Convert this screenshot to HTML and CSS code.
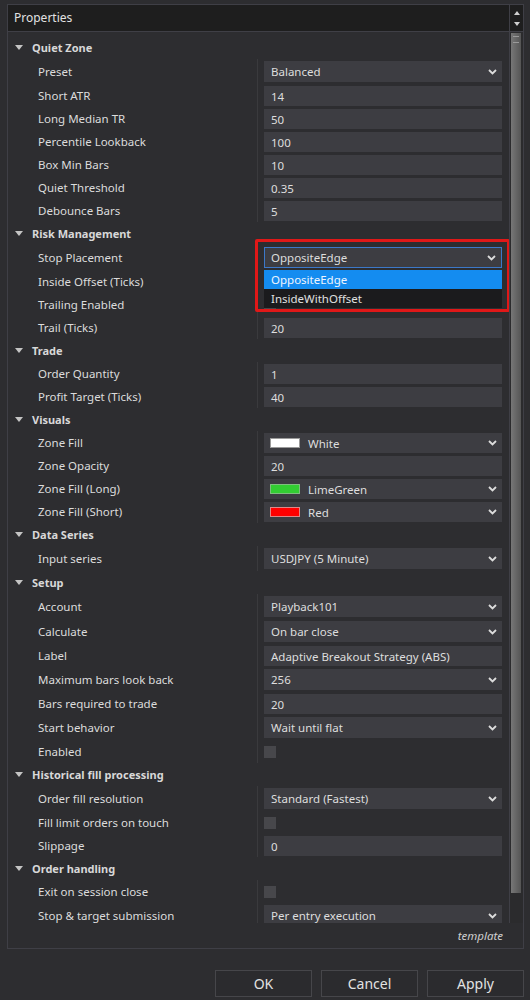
FILE: index.html
```html
<!DOCTYPE html>
<html lang="en">
<head>
    <meta charset="UTF-8">
    <meta name="viewport" content="width=device-width, initial-scale=1.0">
    <title>Properties</title>
    <link rel="stylesheet" href="styles.css">
</head>
<body>

<div class="panel">
    <div class="panel-head">
        <div class="title">Properties</div>
        <div class="spin">
            <span class="tri-up"></span>
            <span class="tri-down"></span>
        </div>
    </div>

    <div class="panel-body">
        <div class="grid">

            <div class="cat"><span class="arrow"></span>Quiet Zone</div>
            <div class="prop tall"><div class="name">Preset</div><div class="val"><div class="box select">Balanced<svg class="chev" viewBox="0 0 9 6"><polyline points="1,1 4.5,4.5 8,1"/></svg></div></div></div>
            <div class="prop"><div class="name">Short ATR</div><div class="val"><div class="box">14</div></div></div>
            <div class="prop"><div class="name">Long Median TR</div><div class="val"><div class="box">50</div></div></div>
            <div class="prop"><div class="name">Percentile Lookback</div><div class="val"><div class="box">100</div></div></div>
            <div class="prop"><div class="name">Box Min Bars</div><div class="val"><div class="box">10</div></div></div>
            <div class="prop"><div class="name">Quiet Threshold</div><div class="val"><div class="box">0.35</div></div></div>
            <div class="prop"><div class="name">Debounce Bars</div><div class="val"><div class="box">5</div></div></div>

            <div class="cat"><span class="arrow"></span>Risk Management</div>
            <div class="prop tall"><div class="name">Stop Placement</div>
                <div class="val open">
                    <div class="box select focus">OppositeEdge<svg class="chev" viewBox="0 0 9 6"><polyline points="1,1 4.5,4.5 8,1"/></svg></div>
                    <div class="droplist">
                        <div class="item active">OppositeEdge</div>
                        <div class="item">InsideWithOffset</div>
                    </div>
                    <div class="mark"></div>
                </div>
            </div>
            <!-- nilai tertutup oleh dropdown -->
            <div class="prop"><div class="name">Inside Offset (Ticks)</div><div class="val"><div class="box"></div></div></div>
            <div class="prop"><div class="name">Trailing Enabled</div><div class="val"><div class="check"></div></div></div>
            <div class="prop"><div class="name">Trail (Ticks)</div><div class="val"><div class="box">20</div></div></div>

            <div class="cat"><span class="arrow"></span>Trade</div>
            <div class="prop"><div class="name">Order Quantity</div><div class="val"><div class="box">1</div></div></div>
            <div class="prop"><div class="name">Profit Target (Ticks)</div><div class="val"><div class="box">40</div></div></div>

            <div class="cat"><span class="arrow"></span>Visuals</div>
            <div class="prop"><div class="name">Zone Fill</div><div class="val"><div class="box select"><span class="swatch white"></span>White<svg class="chev" viewBox="0 0 9 6"><polyline points="1,1 4.5,4.5 8,1"/></svg></div></div></div>
            <div class="prop"><div class="name">Zone Opacity</div><div class="val"><div class="box">20</div></div></div>
            <div class="prop"><div class="name">Zone Fill (Long)</div><div class="val"><div class="box select"><span class="swatch lime"></span>LimeGreen<svg class="chev" viewBox="0 0 9 6"><polyline points="1,1 4.5,4.5 8,1"/></svg></div></div></div>
            <div class="prop"><div class="name">Zone Fill (Short)</div><div class="val"><div class="box select"><span class="swatch red"></span>Red<svg class="chev" viewBox="0 0 9 6"><polyline points="1,1 4.5,4.5 8,1"/></svg></div></div></div>

            <div class="cat"><span class="arrow"></span>Data Series</div>
            <div class="prop tall"><div class="name">Input series</div><div class="val"><div class="box select">USDJPY (5 Minute)<svg class="chev" viewBox="0 0 9 6"><polyline points="1,1 4.5,4.5 8,1"/></svg></div></div></div>

            <div class="cat"><span class="arrow"></span>Setup</div>
            <div class="prop tall"><div class="name">Account</div><div class="val"><div class="box select">Playback101<svg class="chev" viewBox="0 0 9 6"><polyline points="1,1 4.5,4.5 8,1"/></svg></div></div></div>
            <div class="prop tall"><div class="name">Calculate</div><div class="val"><div class="box select">On bar close<svg class="chev" viewBox="0 0 9 6"><polyline points="1,1 4.5,4.5 8,1"/></svg></div></div></div>
            <div class="prop"><div class="name">Label</div><div class="val"><div class="box">Adaptive Breakout Strategy (ABS)</div></div></div>
            <div class="prop tall"><div class="name">Maximum bars look back</div><div class="val"><div class="box select">256<svg class="chev" viewBox="0 0 9 6"><polyline points="1,1 4.5,4.5 8,1"/></svg></div></div></div>
            <div class="prop"><div class="name">Bars required to trade</div><div class="val"><div class="box">20</div></div></div>
            <div class="prop tall"><div class="name">Start behavior</div><div class="val"><div class="box select">Wait until flat<svg class="chev" viewBox="0 0 9 6"><polyline points="1,1 4.5,4.5 8,1"/></svg></div></div></div>
            <div class="prop"><div class="name">Enabled</div><div class="val"><div class="check"></div></div></div>

            <div class="cat"><span class="arrow"></span>Historical fill processing</div>
            <div class="prop tall"><div class="name">Order fill resolution</div><div class="val"><div class="box select">Standard (Fastest)<svg class="chev" viewBox="0 0 9 6"><polyline points="1,1 4.5,4.5 8,1"/></svg></div></div></div>
            <div class="prop"><div class="name">Fill limit orders on touch</div><div class="val"><div class="check"></div></div></div>
            <div class="prop"><div class="name">Slippage</div><div class="val"><div class="box">0</div></div></div>

            <div class="cat"><span class="arrow"></span>Order handling</div>
            <div class="prop"><div class="name">Exit on session close</div><div class="val"><div class="check"></div></div></div>
            <div class="prop tall"><div class="name">Stop &amp; target submission</div><div class="val"><div class="box select">Per entry execution<svg class="chev" viewBox="0 0 9 6"><polyline points="1,1 4.5,4.5 8,1"/></svg></div></div></div>

        </div>

        <div class="scroll">
            <div class="thumb"></div>
        </div>
    </div>

    <div class="panel-foot">template</div>
</div>

<div class="buttons">
    <button class="button">OK</button>
    <button class="button">Cancel</button>
    <button class="button">Apply</button>
</div>

</body>
</html>
```

FILE: styles.css
```css
body {
    margin: 0;
    padding: 0;
    width: 530px;
    height: 1000px;
    overflow: hidden;
    background-color: #2d2d30;
    color: #dedede;
    font-family: "Noto Sans", "Open Sans", sans-serif;
    font-size: 11.5px;
}

/* panel utama */
.panel {
    margin: 4px 6px 0 7px;
    border: 1px solid #3f3f46;
    display: flex;
    flex-direction: column;
}

.panel-head {
    height: 26px;
    display: flex;
    background-color: #1e1e1e;
    border-bottom: 1px solid #3f3f46;
}

.title {
    flex: 1;
    padding-left: 6px;
    line-height: 26px;
    font-size: 12px;
    color: #e2e2e2;
}

.spin {
    width: 14px;
    border-left: 1px solid #3f3f46;
    box-sizing: border-box;
    display: flex;
    flex-direction: column;
    align-items: center;
    justify-content: center;
    gap: 7px;
}

.tri-up,
.tri-down {
    width: 0;
    height: 0;
    border-left: 3px solid transparent;
    border-right: 3px solid transparent;
}

.tri-up {
    border-bottom: 4px solid #d0d0d0;
}

.tri-down {
    border-top: 4px solid #d0d0d0;
}

.panel-body {
    height: 891px;
    display: flex;
}

.grid {
    flex: 1;
    padding-top: 4px;
    overflow: hidden;
}

/* baris kategori */
.cat {
    height: 23px;
    display: flex;
    align-items: center;
    padding-left: 7px;
    font-weight: bold;
    font-size: 11px;
    color: #d8d8d8;
}

.arrow {
    width: 0;
    height: 0;
    border-left: 4px solid transparent;
    border-right: 4px solid transparent;
    border-top: 5px solid #c4c4c4;
    margin-right: 9px;
}

/* baris properti */
.prop {
    height: 23px;
    display: flex;
}

.prop.tall {
    height: 25px;
}

.name {
    width: 249px;
    padding-left: 30px;
    box-sizing: border-box;
    display: flex;
    align-items: center;
    white-space: nowrap;
    color: #dcdcdc;
}

.val {
    flex: 1;
    position: relative;
    border-left: 1px solid #3a3a3d;
    padding: 2px 7px 1px 6px;
}

.prop.tall .val {
    padding-top: 2px;
    padding-bottom: 2px;
}

.box {
    height: 20px;
    box-sizing: border-box;
    display: flex;
    align-items: center;
    padding-left: 7px;
    background-color: #3d3d42;
    color: #dedede;
    white-space: nowrap;
}

.prop.tall .box {
    height: 21px;
}

.box.focus {
    border: 1px solid #3c78c8;
    padding-left: 6px;
}

.chev {
    width: 9px;
    height: 6px;
    margin-left: auto;
    margin-right: 5px;
    fill: none;
    stroke: #dcdcdc;
    stroke-width: 1.8;
}

.swatch {
    width: 30px;
    height: 10px;
    box-sizing: border-box;
    margin-left: -1px;
    margin-right: 8px;
    border: 1px solid #9a9a9a;
}

.swatch.white {
    background-color: #ffffff;
}

.swatch.lime {
    background-color: #32cd32;
    border-color: #7fbf7f;
}

.swatch.red {
    background-color: #ff0000;
    border-color: #d88;
}

.check {
    width: 12px;
    height: 12px;
    margin-top: 4px;
    background-color: #47474b;
}

/* daftar dropdown yang terbuka */
.droplist {
    position: absolute;
    top: 25px;
    left: 6px;
    right: 7px;
    background-color: #1b1b1d;
    z-index: 2;
}

.item {
    height: 19px;
    line-height: 19px;
    padding-left: 7px;
    color: #e0e0e0;
}

.item.active {
    background-color: #148cf0;
    color: #eef5ff;
}

/* kotak penanda merah */
.mark {
    position: absolute;
    top: -6px;
    left: -3px;
    right: -1px;
    height: 73px;
    box-sizing: border-box;
    border: 3px solid #e01818;
    border-radius: 2px;
    z-index: 3;
}

/* scrollbar */
.scroll {
    width: 14px;
    box-sizing: border-box;
    border-left: 1px solid #3f3f46;
    padding: 1px 2px 0 1px;
    background-color: #2b2b2d;
}

.thumb {
    height: 860px;
    background: linear-gradient(to right, #777777, #555555);
    position: relative;
}

.thumb::before {
    content: "";
    position: absolute;
    top: 3px;
    left: 2px;
    right: 2px;
    height: 5px;
    border-top: 1px solid #9a9a9a;
    border-bottom: 1px solid #9a9a9a;
}

.panel-foot {
    height: 25px;
    line-height: 25px;
    text-align: right;
    padding-right: 20px;
    font-style: italic;
    color: #cfcfcf;
}

/* tombol bawah */
.buttons {
    margin-top: 21px;
    padding-right: 6px;
    display: flex;
    justify-content: flex-end;
    gap: 9px;
}

.button {
    width: 97px;
    height: 27px;
    background-color: #2b2b2e;
    border: 1px solid #46464a;
    color: #e2e2e2;
    font-family: "Noto Sans", "Open Sans", sans-serif;
    font-size: 14px;
    padding: 0;
    cursor: pointer;
}
```
